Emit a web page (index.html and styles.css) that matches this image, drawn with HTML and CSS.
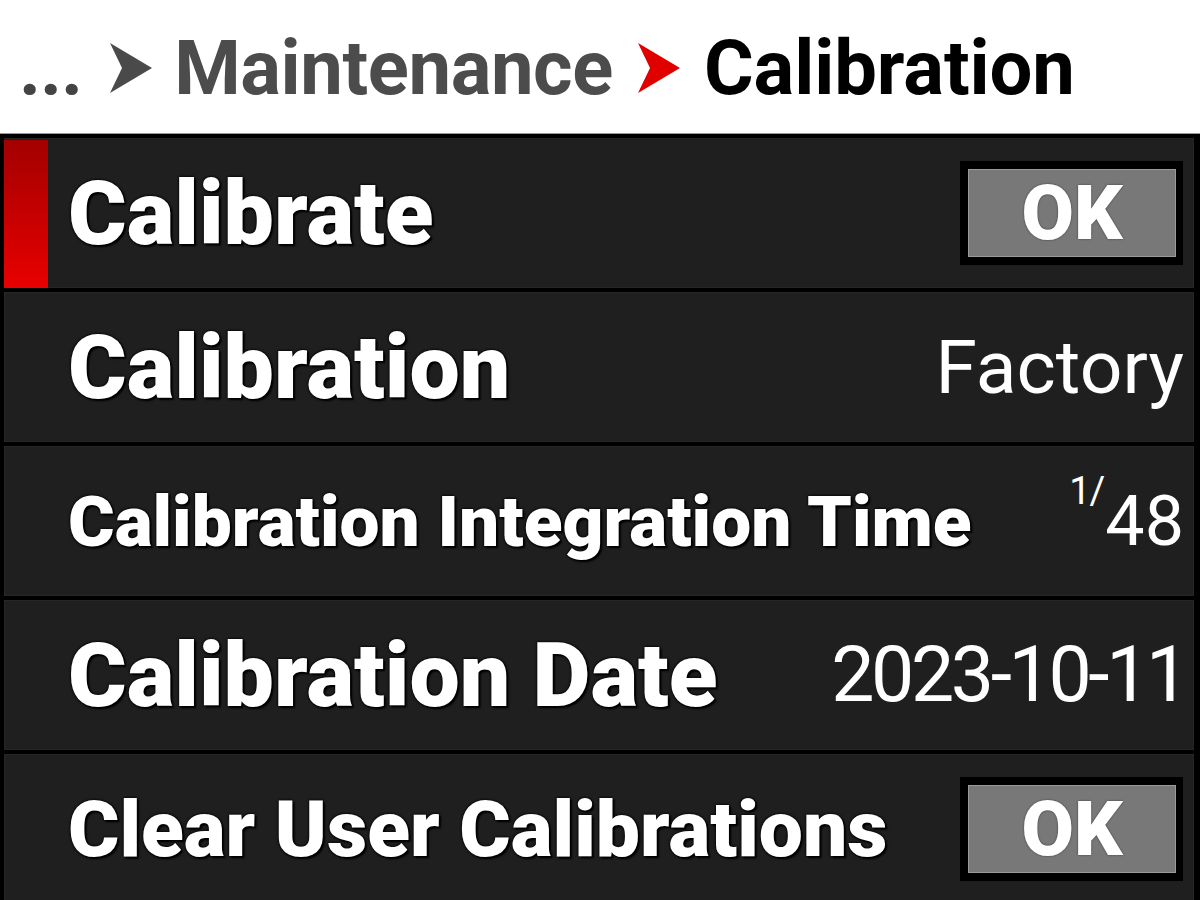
FILE: index.html
```html
<!DOCTYPE html>
<html>
<head>
<meta charset="utf-8">
<link rel="stylesheet" href="styles.css">
</head>
<body>
<div class="screen">
  <header class="crumbs">
    <span class="dots">...</span>
    <svg class="chev" viewBox="0 0 42 50"><path d="M0 0 L42 25 L0 50 L12 25 Z" fill="#4a4a4a"/></svg>
    <span class="crumb parent">Maintenance</span>
    <svg class="chev" viewBox="0 0 42 50"><path d="M0 0 L42 25 L0 50 L12 25 Z" fill="#e00000"/></svg>
    <span class="crumb current">Calibration</span>
  </header>
  <main class="list">
    <div class="row selected">
      <div class="marker"></div>
      <div class="label l-lg">Calibrate</div>
      <div class="btn"><span>OK</span></div>
    </div>
    <div class="row">
      <div class="marker"></div>
      <div class="label l-lg">Calibration</div>
      <div class="value v-factory">Factory</div>
    </div>
    <div class="row">
      <div class="marker"></div>
      <div class="label l-sm">Calibration Integration Time</div>
      <div class="value v-frac"><sup class="num">1/</sup><span>48</span></div>
    </div>
    <div class="row">
      <div class="marker"></div>
      <div class="label l-lg">Calibration Date</div>
      <div class="value v-date">2023-10-11</div>
    </div>
    <div class="row">
      <div class="marker"></div>
      <div class="label l-md">Clear User Calibrations</div>
      <div class="btn"><span>OK</span></div>
    </div>
  </main>
</div>
</body>
</html>
```
FILE: styles.css
```css
html, body {
  margin: 0;
  padding: 0;
  background: #000;
}
.screen {
  width: 1200px;
  height: 900px;
  overflow: hidden;
  display: flex;
  flex-direction: column;
  font-family: Roboto, "Liberation Sans", sans-serif;
  background: #000;
}
.crumbs {
  flex: none;
  background: #fff;
  border-bottom: 1px solid #9a9a9a;
  display: flex;
  align-items: center;
  padding-left: 19px;
  box-sizing: border-box;
  height: 134px;
  padding-top: 2px;
}
.dots {
  font-size: 76px;
  font-weight: 700;
  color: #444;
  letter-spacing: -1px;
  margin-right: 28px;
}
.chev {
  width: 42px;
  height: 50px;
  flex: none;
}
.crumb {
  font-size: 76px;
  font-weight: 700;
  line-height: 1;
  letter-spacing: -0.4px;
}
.parent {
  color: #4c4c4c;
  margin: 0 25px 0 22px;
}
.current {
  color: #000;
  margin-left: 24px;
  letter-spacing: -0.1px;
}
.list {
  flex: 1;
  display: flex;
  flex-direction: column;
  gap: 4px;
  padding: 4px 6px 0 4px;
  background: #000;
}
.row {
  height: 150px;
  flex: none;
  background: #1f1f1f;
  box-shadow: inset 0 0 0 1px #262626;
  display: flex;
  align-items: center;
  padding-right: 10px;
}
.marker {
  width: 44px;
  align-self: stretch;
  margin: 2px 20px 0 0;
  flex: none;
}
.selected .marker {
  background: linear-gradient(#a30000, #e80000);
}
.label {
  flex: 1;
  color: #fff;
  font-weight: 900;
  white-space: nowrap;
  text-shadow: 0 0 2px #000, 0 0 3px #000, 2px 2px 2px #000;
  letter-spacing: 0;
}
.l-lg { font-size: 89.5px; }
.l-md { font-size: 78.5px; }
.l-sm { font-size: 71.2px; }
.value {
  color: #fff;
  font-weight: 400;
  white-space: nowrap;
}
.v-factory { font-size: 75px; }
.v-date { font-size: 77px; letter-spacing: -3.4px; margin-right: -2px; }
.v-frac { font-size: 70px; display: flex; align-items: flex-start; }
.v-frac .num {
  font-size: 38px;
  line-height: 1;
  margin-right: 1px;
  margin-top: -8px;
  vertical-align: top;
  letter-spacing: -1px;
}
.btn {
  width: 223px;
  height: 104px;
  background: #000;
  box-sizing: border-box;
  padding: 8px 7px 8px 8px;
  margin-right: 1px;
  flex: none;
}
.btn span {
  display: flex;
  height: 100%;
  align-items: center;
  justify-content: center;
  background: #787878;
  box-shadow: inset 0 0 0 1px #9a9a9a;
  color: #fff;
  font-size: 76px;
  font-weight: 900;
  text-shadow: 0 0 2px #333;
}
```
